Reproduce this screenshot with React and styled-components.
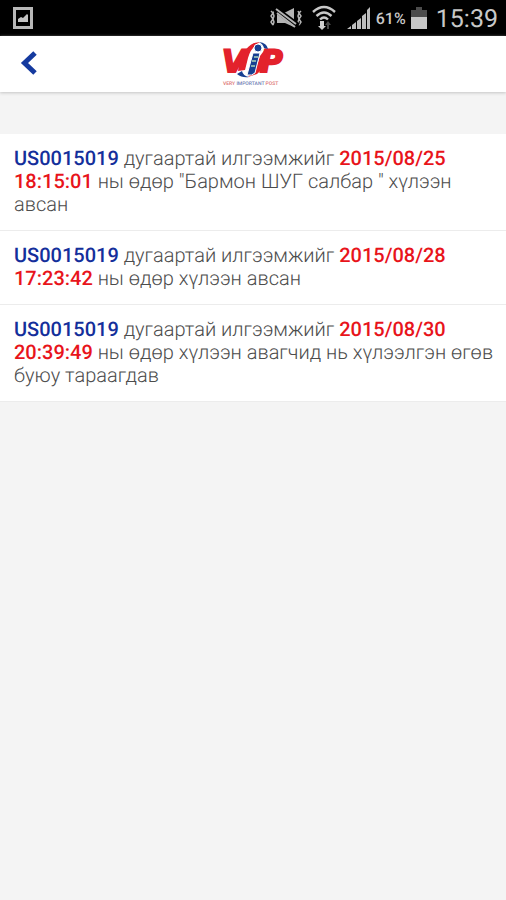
import React from 'react'
import styled, { createGlobalStyle } from 'styled-components'

const events = [
    { id: 1, code: 'US0015019', date: '2015/08/25 18:15:01', text: 'ны өдөр "Бармон ШУГ салбар " хүлээн авсан' },
    { id: 2, code: 'US0015019', date: '2015/08/28 17:23:42', text: 'ны өдөр хүлээн авсан' },
    { id: 3, code: 'US0015019', date: '2015/08/30 20:39:49', text: 'ны өдөр хүлээн авагчид нь хүлээлгэн өгөв буюу тараагдав' },
]

const PictureIcon = () => (
    <svg width="20" height="22" viewBox="0 0 20 22">
        <rect x="1.5" y="1.5" width="17" height="19" fill="none" stroke="#b8b8b8" strokeWidth="3" />
        <path d="M5 15v-3l3-2 2 1 4-4 1 1v7z" fill="#c4c4c4" />
    </svg>
)

const MuteIcon = () => (
    <svg width="34" height="20" viewBox="0 0 34 20" fill="none" stroke="#b4b4b4">
        <path d="M2 3l2 2-2 3 2 3-2 3 2 3M5 3l-1 2 1 3-1 3 1 3-1 3M32 3l-2 2 2 3-2 3 2 3-2 3M29 3l1 2-1 3 1 3-1 3 1 3" strokeWidth="1.5" />
        <path d="M8 5h7l10-5v19l-9-4H8z" fill="#b4b4b4" stroke="none" />
        <path d="M5 0l24 18" stroke="#000" strokeWidth="6" />
        <path d="M7 1l20 15M8 5l18 14" strokeWidth="2" />
    </svg>
)

const WifiIcon = () => (
    <svg width="24" height="26" viewBox="0 0 24 26" fill="none" stroke="#c8c8c8" strokeWidth="2.4">
        <path d="M1 7q11-10 22 0M4.500 11q7.500-7 15 0M8 14.500q4-4 8 0" />
        <path d="M8 16h4v5h2l-4 4-4-4h2z" fill="#d0d0d0" stroke="none" />
        <path d="M15 24v-4h-2l3-4 3 4h-2v4z" fill="#484848" stroke="none" />
    </svg>
)

const SignalIcon = () => (
    <svg width="24" height="23" viewBox="0 0 24 23" fill="#bdbdbd">
        <path d="M0 22l4-3v3zM5 18l4-3v7H5zM10 14l4-3v11h-4zM15 9l4-3v16h-4zM20 3l3-3v22h-3z" />
    </svg>
)

const BatteryIcon = () => (
    <svg width="16" height="24" viewBox="0 0 16 24">
        <path d="M5 1h6v3h5v7H0V4h5z" fill="#4c4c4c" />
        <path d="M0 11h16v12H0z" fill="#c6c6c6" />
    </svg>
)

const BackIcon = () => (
    <svg width="18" height="26" viewBox="0 0 18 26">
        <path d="M15 2L4.500 12 15 22" fill="none" stroke="#153a9f" strokeWidth="5" />
    </svg>
)

const Logo = () => (
    <svg width="66" height="46" viewBox="0 0 66 46" role="img" aria-label="VIP Very Important Post">
        <g fill="#e3222c" stroke="#e3222c" strokeWidth="2" fontFamily="DejaVu Sans" fontWeight="700" fontStyle="italic" fontSize="31">
            <text x="2" y="31">V</text>
            <text x="40" y="31">P</text>
        </g>
        <path d="M18 30Q21 8 34 2l6-1q-9 5-12 16l-3 12z" fill="#e3222c" />
        <path d="M46 7q3 17-9 26l-9 3q9-8 12-21z" fill="#e3222c" />
        <path d="M33 12h7l-5 20q-3 3-8 2z" fill="#173f91" stroke="#fff" />
        <path d="M17 33q5 4 12 3-6-1-7-6z" fill="#173f91" />
        <path d="M39 1q8 1 9 7l-4-1q-1-4-5-6z" fill="#173f91" />
        <circle cx="38" cy="7" r="4" fill="#173f91" stroke="#fff" />
        <path d="M34 16h4M32 20h4M31 25h4" stroke="#85aeb0" strokeWidth="2" />
        <text x="3" y="44" fontFamily="Roboto" fontSize="5" fontWeight="500" fill="#dd7373">
            VERY <tspan fill="#7080b5">IMPORTANT</tspan> POST
        </text>
    </svg>
)

const App = () => {
    return (
        <Page>
            <GlobalStyle />
            <StatusBar>
                <PictureIcon />
                <StatusRight>
                    <MuteIcon />
                    <WifiIcon />
                    <Group>
                        <SignalIcon />
                        <Percent>61%</Percent>
                        <BatteryIcon />
                    </Group>
                    <Clock>15:39</Clock>
                </StatusRight>
            </StatusBar>
            <Header>
                <BackButton type="button" aria-label="Back">
                    <BackIcon />
                </BackButton>
                <Logo />
            </Header>
            <List>
                {events.map(event => (
                    <Item key={event.id}>
                        <Mark $color="#142f9b">{event.code}</Mark> дугаартай илгээмжийг{' '}
                        <Mark $color="#e8141b">{event.date}</Mark> {event.text}
                    </Item>
                ))}
            </List>
        </Page>
    )
}

const GlobalStyle = createGlobalStyle`
    body{
        margin: 0;
        background: #f4f4f4;
        font-family: Roboto, sans-serif;
        text-rendering: geometricPrecision;
    }
    svg{
        display: block;
        flex-shrink: 0;
    }
`

const Page = styled.div`
    min-height: 100vh;
    background: #f4f4f4;
`

const StatusBar = styled.div`
    display: flex;
    align-items: center;
    justify-content: space-between;
    height: 36px;
    padding: 0 8px 0 13px;
    background: #000;
    color: #c8c8c8;
`

const StatusRight = styled.div`
    display: flex;
    align-items: center;
    gap: 9px;
`

const Group = styled.div`
    display: flex;
    align-items: center;
    gap: 5px;
    margin-left: 2px;
`

const Percent = styled.span`
    font-size: 16px;
    font-weight: 500;
`

const Clock = styled.span`
    padding-top: 4px;
    font-size: 25px;
    line-height: 36px;
`

const Header = styled.header`
    display: grid;
    grid-template-columns: 1fr auto 1fr;
    align-items: center;
    height: 56px;
    background: #fff;
    box-shadow: 0 1px 3px #c4c4c4;
`

const BackButton = styled.button`
    justify-self: start;
    padding: 0 20px;
    border: none;
    background: none;
    cursor: pointer;
`

const List = styled.ul`
    margin: 42px 0 0;
    padding: 0;
    list-style: none;
    background: #fff;
`

const Item = styled.li`
    padding: 13px 8px 14px 14px;
    border-bottom: 1px solid #ececec;
    color: #4c4c4c;
    font-size: 20px;
    font-weight: 300;
    line-height: 23px;
`

const Mark = styled.strong`
    color: ${props => props.$color};
    font-weight: 500;
`

export default App
